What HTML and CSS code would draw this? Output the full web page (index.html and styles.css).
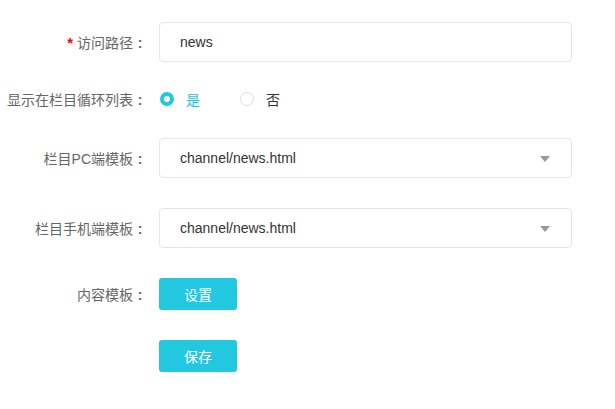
FILE: index.html
```html
<!DOCTYPE html>
<html lang="zh-CN">
<head>
    <meta charset="UTF-8">
    <title>栏目设置</title>
    <link rel="stylesheet" href="styles.css">
</head>
<body>

<form class="form">
    <div class="form-item">
        <label class="form-label"><span class="required">*</span> 访问路径</label>
        <div class="form-control">
            <input class="input" type="text" value="news">
        </div>
    </div>

    <div class="form-item radio-row">
        <label class="form-label">显示在栏目循环列表</label>
        <div class="form-control radios">
            <span class="radio checked"><i class="radio-dot"></i>是</span>
            <span class="radio"><i class="radio-dot"></i>否</span>
        </div>
    </div>

    <div class="form-item">
        <label class="form-label">栏目PC端模板</label>
        <div class="form-control">
            <div class="select">channel/news.html<i class="caret"></i></div>
        </div>
    </div>

    <div class="form-item">
        <label class="form-label">栏目手机端模板</label>
        <div class="form-control">
            <div class="select">channel/news.html<i class="caret"></i></div>
        </div>
    </div>

    <div class="form-item">
        <label class="form-label">内容模板</label>
        <div class="form-control">
            <button type="button" class="btn">设置</button>
        </div>
    </div>

    <div class="form-item">
        <div class="form-label empty"></div>
        <div class="form-control">
            <button type="button" class="btn">保存</button>
        </div>
    </div>
</form>

</body>
</html>
```

FILE: styles.css
```css
body {
    margin: 0;
    background: #fff;
    font-family: "Liberation Sans", "Noto Sans CJK SC", sans-serif;
    font-size: 14px;
    color: #333;
}
.form {
    display: flex;
    flex-direction: column;
    gap: 30px;
    padding-top: 22px;
}
.form-item {
    display: flex;
    align-items: center;
}
.form-label {
    width: 147px;
    flex-shrink: 0;
    text-align: right;
    color: #666;
    margin-right: 12px;
}
.form-label::after {
    content: ":";
    display: inline-block;
    width: 14px;
    text-align: center;
    font-weight: bold;
}
.form-label.empty::after {
    content: "";
}
.required {
    color: #f00;
    font-size: 15px;
    font-weight: bold;
}
.form-control {
    width: 413px;
}
.input,
.select {
    box-sizing: border-box;
    width: 100%;
    height: 40px;
    border: 1px solid #e6e6e6;
    border-radius: 4px;
    padding: 0 20px;
    font: inherit;
    color: #333;
    outline: none;
}
.select {
    display: flex;
    align-items: center;
    position: relative;
}
.caret {
    position: absolute;
    right: 21px;
    top: 17px;
    width: 0;
    height: 0;
    border-left: 5px solid transparent;
    border-right: 5px solid transparent;
    border-top: 6px solid #999;
}
.radio-row {
    height: 18px;
    margin-top: -2px;
}
.radios {
    display: flex;
    align-items: center;
}
.radio {
    display: inline-flex;
    align-items: center;
    width: 80px;
    color: #333;
}
.radio-dot {
    box-sizing: border-box;
    width: 14px;
    height: 14px;
    border-radius: 50%;
    border: 1px solid #dcdfe6;
    margin: 0 12px 0 1px;
    background: #fff;
}
.radio.checked {
    color: #22c7e0;
}
.radio.checked .radio-dot {
    border: 4px solid #22c7e0;
}
.btn {
    width: 78px;
    height: 32px;
    border: none;
    border-radius: 3px;
    background: #22c7e0;
    color: #fff;
    font: inherit;
    cursor: pointer;
}
```
